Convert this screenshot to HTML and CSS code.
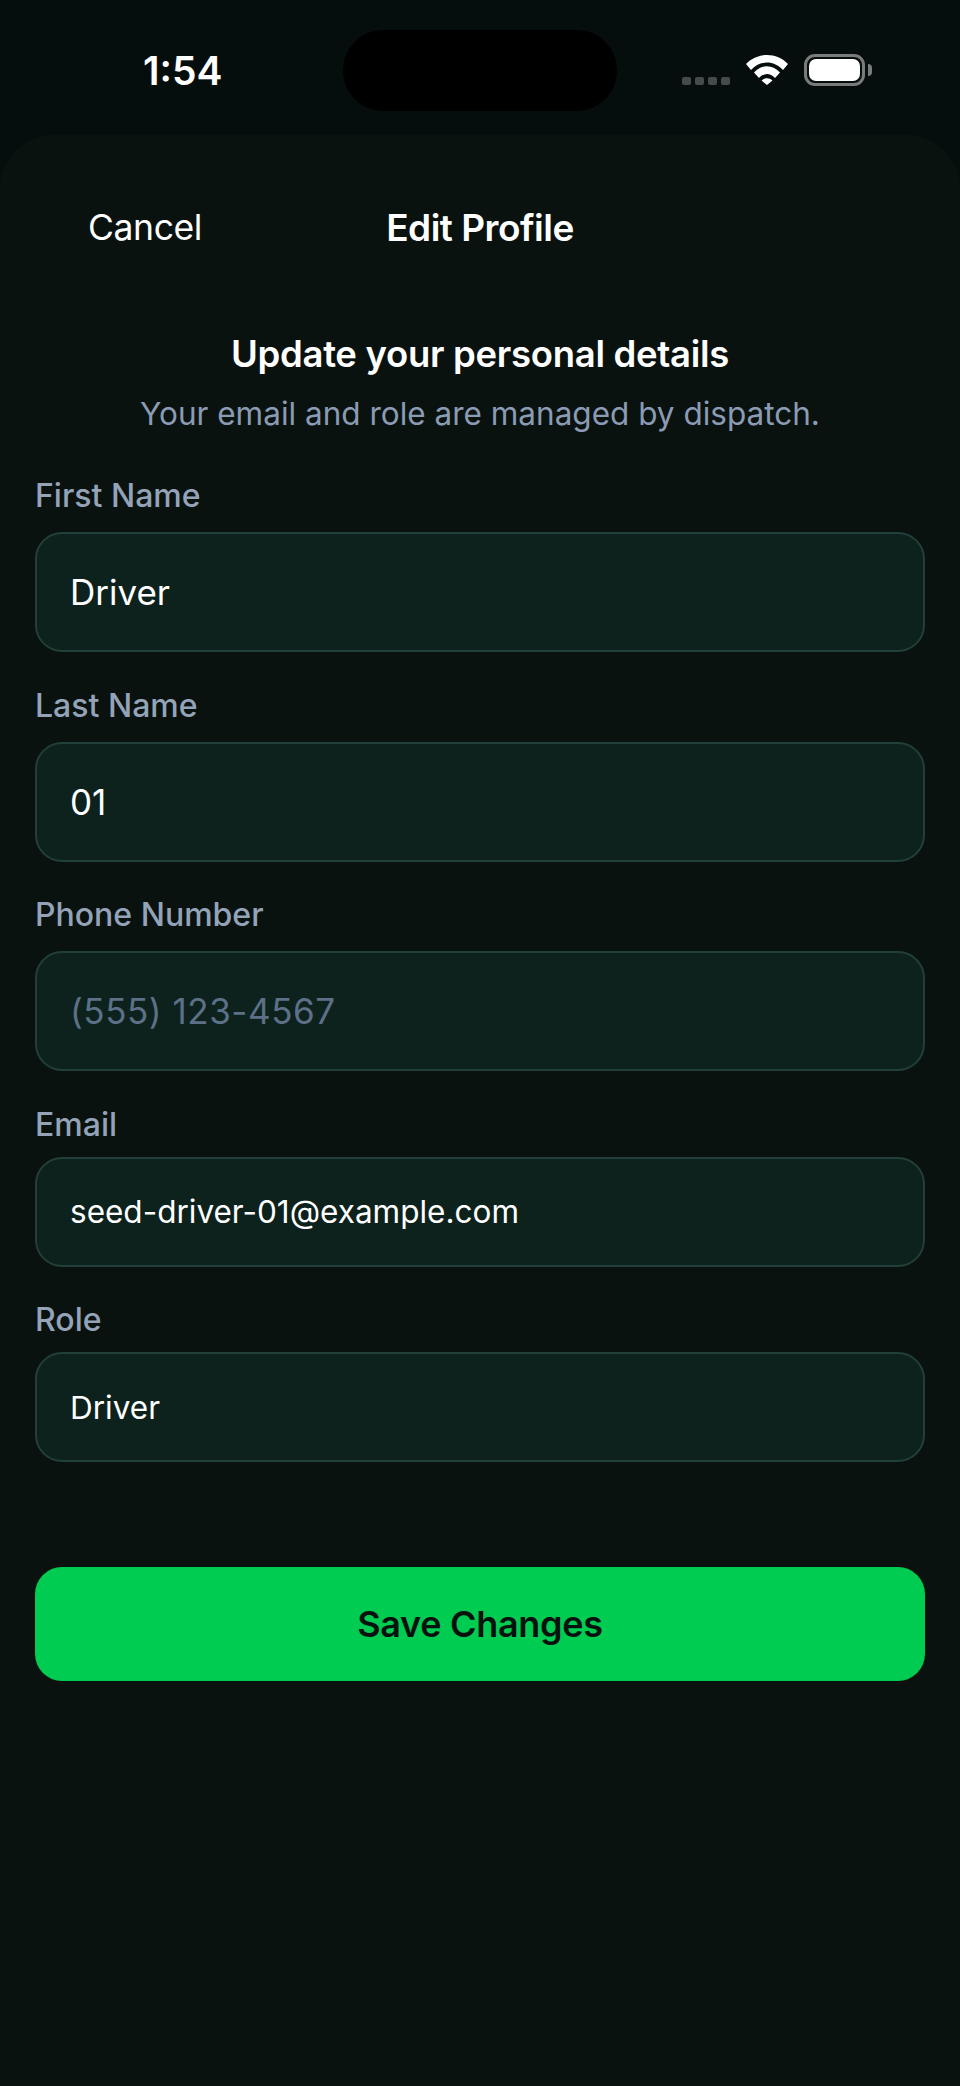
FILE: index.html
```html
<!DOCTYPE html>
<html lang="en">

<head>
    <meta charset="UTF-8">
    <meta name="viewport" content="width=device-width, initial-scale=1.0">
    <title>Edit Profile</title>

    <link rel="stylesheet" href="styles.css">
</head>

<body>

    <div class="status-bar">
        <span class="time">1:54</span>
        <div class="island"></div>
        <div class="status-icons">
            <div class="signal-dots">
                <span></span><span></span><span></span><span></span>
            </div>
            <svg class="wifi" width="42" height="30" viewBox="0 0 42 30">
                <path d="M0 9C11-3 31-3 42 9L37 15C28 5 14 5 5 15Z" />
                <path d="M8 17.5C16 9 26 9 34 17.5L29 23C24 17.5 18 17.5 13 23Z" />
                <path d="M15.5 25.5C19 22.5 23 22.5 26.5 25.5L21 30Z" />
            </svg>
            <div class="battery">
                <div class="battery-fill"></div>
            </div>
            <div class="battery-nub"></div>
        </div>
    </div>

    <div class="sheet">
        <div class="nav">
            <span class="cancel">Cancel</span>
            <h1 class="nav-title">Edit Profile</h1>
        </div>

        <div class="intro">
            <h2>Update your personal details</h2>
            <p>Your email and role are managed by dispatch.</p>
        </div>

        <div class="form">
            <div class="field">
                <label>First Name</label>
                <div class="input">Driver</div>
            </div>
            <div class="field">
                <label>Last Name</label>
                <div class="input">01</div>
            </div>
            <div class="field">
                <label>Phone Number</label>
                <div class="input placeholder">(555) 123-4567</div>
            </div>
            <div class="field readonly">
                <label>Email</label>
                <div class="input">seed-driver-01@example.com</div>
            </div>
            <div class="field readonly">
                <label>Role</label>
                <div class="input">Driver</div>
            </div>
        </div>

        <div class="save-btn">Save Changes</div>
    </div>

</body>

</html>
```

FILE: styles.css
```css
* {
    box-sizing: border-box;
    margin: 0;
    padding: 0;
}

html,
body {
    height: 100%;
}

body {
    background-color: #060e0d;
    font-family: Inter, "Liberation Sans", sans-serif;
    color: #ffffff;
    display: flex;
    flex-direction: column;
    overflow: hidden;
}

.status-bar {
    height: 135px;
    flex-shrink: 0;
    position: relative;
}

.time {
    position: absolute;
    left: 143px;
    top: 50px;
    font-size: 39px;
    line-height: 42px;
    font-weight: 600;
}

.island {
    position: absolute;
    left: 343px;
    top: 30px;
    width: 274px;
    height: 81px;
    border-radius: 40px;
    background-color: #000000;
}

.status-icons {
    position: absolute;
    left: 682px;
    top: 54px;
    display: flex;
    align-items: flex-start;
}

.signal-dots {
    display: flex;
    gap: 4px;
    margin-top: 23px;
    margin-right: 16px;
}

.signal-dots span {
    width: 9px;
    height: 8px;
    border-radius: 2px;
    background-color: #454a4a;
}

.wifi {
    fill: #ffffff;
    margin-top: 1px;
    margin-right: 16px;
}

.battery {
    width: 61px;
    height: 32px;
    border: 3px solid #7a7c7c;
    border-radius: 11px;
    padding: 2px;
}

.battery-fill {
    width: 100%;
    height: 100%;
    border-radius: 7px;
    background-color: #ffffff;
}

.battery-nub {
    width: 4px;
    height: 12px;
    margin-top: 10px;
    margin-left: 3px;
    border-radius: 0 4px 4px 0;
    background-color: #7a7c7c;
}

.sheet {
    flex: 1;
    background-color: #09120f;
    border-radius: 53px 53px 0 0;
    padding: 0 35px;
}

.nav {
    position: relative;
    height: 197px;
    padding-top: 70px;
    text-align: center;
}

.cancel {
    position: absolute;
    left: 53px;
    top: 70px;
    font-size: 35.5px;
    line-height: 46px;
    letter-spacing: -0.4px;
}

.nav-title {
    font-size: 37px;
    line-height: 46px;
    font-weight: 600;
    letter-spacing: -0.5px;
}

.intro {
    text-align: center;
    margin-bottom: 40px;
}

.intro h2 {
    font-size: 36.5px;
    line-height: 44px;
    font-weight: 600;
    letter-spacing: -0.3px;
}

.intro p {
    margin-top: 17px;
    font-size: 31.5px;
    line-height: 42px;
    color: #8b9bb4;
}

.form {
    display: flex;
    flex-direction: column;
    gap: 32.5px;
}

.field label {
    display: block;
    font-size: 32px;
    line-height: 42px;
    font-weight: 500;
    color: #94a3b8;
    margin-bottom: 15px;
}

.input {
    height: 120px;
    padding: 0 33px;
    display: flex;
    align-items: center;
    background-color: #0d221c;
    border: 2px solid #223f39;
    border-radius: 27px;
    font-size: 35px;
}

.placeholder {
    color: #5c7088;
    letter-spacing: 0.55px;
}

.readonly label {
    margin-bottom: 11px;
}

.readonly .input {
    height: 110px;
    font-size: 31.5px;
}

.save-btn {
    margin-top: 105px;
    height: 114px;
    display: flex;
    align-items: center;
    justify-content: center;
    background-color: #00cc52;
    border-radius: 27px;
    font-size: 36px;
    font-weight: 600;
    letter-spacing: -0.3px;
    color: #06120e;
}
```
